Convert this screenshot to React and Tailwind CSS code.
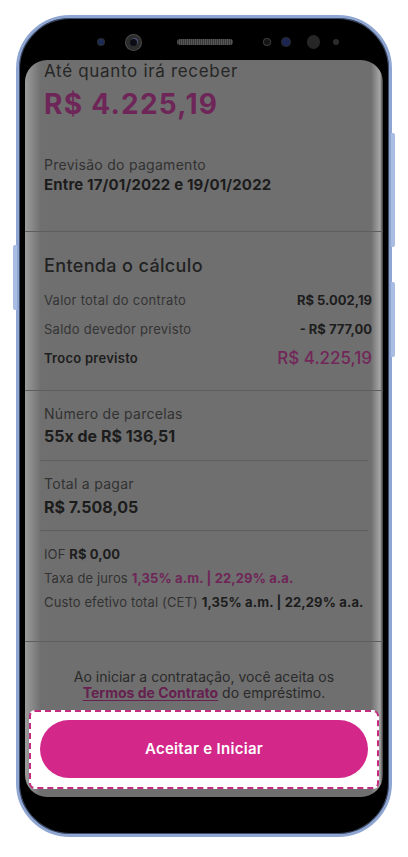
import React from 'react';

const font = { fontFamily: 'Inter, "Open Sans", sans-serif' };

function Row({ label, value, labelClass = 'text-[#343434]', valueClass = 'text-[13px] font-bold text-[#1d1d1d]' }) {
  return (
    <div className="flex h-[20px] items-center justify-between">
      <span className={`text-[13px] tracking-[0.02em] ${labelClass}`}>{label}</span>
      <span className={valueClass}>{value}</span>
    </div>
  );
}

export default function App() {
  return (
    <div className="min-h-[857px] w-[408px] bg-white pl-[16px] pt-[15px] antialiased" style={font}>
      {/* Phone */}
      <div className="relative h-[822px] w-[376px]">
        <div className="absolute right-[-3px] top-[118px] h-[114px] w-[4px] rounded-r-[2px] bg-[#a9bde2]" />
        <div className="absolute right-[-3px] top-[267px] h-[75px] w-[4px] rounded-r-[2px] bg-[#a9bde2]" />
        <div className="absolute left-[-3px] top-[230px] h-[65px] w-[4px] rounded-l-[2px] bg-[#a9bde2]" />

        <div className="flex h-full flex-col rounded-[54px] border-[3px] border-[#8ea6d1] bg-black px-[6px] shadow-[inset_0_0_0_1px_#3d4c6b]">
          {/* Top bezel */}
          <div className="flex h-[42px] shrink-0 items-center pt-[6px]">
            <div className="ml-[73px] h-[6px] w-[6px] rounded-full bg-[#1d2c57] shadow-[0_0_0_1px_#2b2b2b]" />
            <div className="ml-[22px] flex h-[15px] w-[15px] items-center justify-center rounded-full bg-[#2c2c2c] shadow-[0_0_0_1px_#4a4a4a]">
              <div className="h-[7px] w-[7px] rounded-full bg-[#0c0c16] shadow-[1px_-1px_0_0_#4b5170]" />
            </div>
            <div className="ml-[36px] h-[6px] w-[56px] rounded-full bg-[#4a4a4a] bg-[repeating-linear-gradient(90deg,#555_0px,#555_1px,#3a3a3a_1px,#3a3a3a_2px)]" />
            <div className="ml-[31px] h-[6px] w-[6px] rounded-full bg-[#141414] shadow-[0_0_0_1px_#3c3c3c]" />
            <div className="ml-[12px] h-[8px] w-[8px] rounded-full bg-[#1b2550] shadow-[0_0_0_1px_#2a2a2a]" />
            <div className="ml-[17px] h-[14px] w-[13px] rounded-full bg-[#262626]" />
            <div className="ml-[13px] h-[6px] w-[6px] rounded-full bg-[#2c2c2c]" />
          </div>

          {/* Screen */}
          <div className="h-[737px] shrink-0 overflow-hidden rounded-[22px] bg-[linear-gradient(to_right,#9c9c9c,#6f6f6f_16px,#6f6f6f_calc(100%-12px),#a6a6a6_calc(100%-3px),#3a3a3a)]">
            <div className="pl-[19px] pr-[11px]">
              <div className="text-[17px] leading-[22px] tracking-[0.04em] text-[#262626]">Até quanto irá receber</div>
              <div className="mt-[5px] text-[28px] font-bold leading-[34px] tracking-[0.045em] text-[#6e2557]">R$ 4.225,19</div>
              <div className="mt-[34px] text-[14px] leading-[20px] tracking-[0.02em] text-[#323232]">Previsão do pagamento</div>
              <div className="text-[15px] font-bold leading-[20px] tracking-[0.01em] text-[#1c1c1c]">Entre 17/01/2022 e 19/01/2022</div>
            </div>
            <div className="mt-[36px] h-px bg-[#5e5e5e]" />

            <div className="pl-[19px] pr-[11px]">
              <div className="mt-[22px] text-[18px] font-medium leading-[24px] tracking-[0.02em] text-[#222]">Entenda o cálculo</div>
              <div className="mt-[13px] flex flex-col gap-[9px]">
                <Row label="Valor total do contrato" value="R$ 5.002,19" />
                <Row label="Saldo devedor previsto" value="- R$ 777,00" />
                <Row
                  label="Troco previsto"
                  labelClass="font-semibold text-[#1d1d1d]"
                  value="R$ 4.225,19"
                  valueClass="text-[17px] font-medium text-[#722759]"
                />
              </div>
            </div>
            <div className="mt-[21px] h-px bg-[#5e5e5e]" />

            <div className="px-[15px]">
              <div className="px-[4px]">
                <div className="mt-[13px] text-[14px] leading-[20px] tracking-[0.02em] text-[#323232]">Número de parcelas</div>
                <div className="mt-[1px] text-[16px] font-bold leading-[22px] text-[#1c1c1c]">55x de R$ 136,51</div>
              </div>
              <div className="mt-[13px] h-px bg-[#5e5e5e]" />
              <div className="px-[4px]">
                <div className="mt-[13px] text-[14px] leading-[20px] tracking-[0.02em] text-[#323232]">Total a pagar</div>
                <div className="mt-[2px] text-[16px] font-bold leading-[22px] text-[#1c1c1c]">R$ 7.508,05</div>
              </div>
              <div className="mt-[12px] h-px bg-[#5e5e5e]" />
              <div className="mt-[13px] flex flex-col gap-[4px] px-[4px] text-[13px] leading-[20px] tracking-[0.01em] text-[#323232]">
                <div>IOF <span className="font-bold text-[#1c1c1c]">R$ 0,00</span></div>
                <div>Taxa de juros <span className="font-bold text-[#6e2557]">1,35% a.m. | 22,29% a.a.</span></div>
                <div>Custo efetivo total (CET) <span className="font-bold text-[#1c1c1c]">1,35% a.m. | 22,29% a.a.</span></div>
              </div>
            </div>
            <div className="mt-[29px] h-px bg-[#5e5e5e]" />

            <p className="mt-[27px] text-center text-[14px] leading-[16px] text-[#2a2a2a]">
              Ao iniciar a contratação, você aceita os
              <br />
              <span className="font-bold text-[#662150] underline underline-offset-2">Termos de Contrato</span> do empréstimo.
            </p>

            <div className="mx-[4px] mt-[9px] rounded-[6px] border-2 border-dashed border-[#c42c82] bg-white px-[9px] pb-[9px] pt-[8px]">
              <button className="flex h-[58px] w-full items-center justify-center rounded-full bg-[#d3278a] text-[15px] font-semibold tracking-[0.02em] text-white">
                Aceitar e Iniciar
              </button>
            </div>
          </div>
        </div>
      </div>
    </div>
  );
}
